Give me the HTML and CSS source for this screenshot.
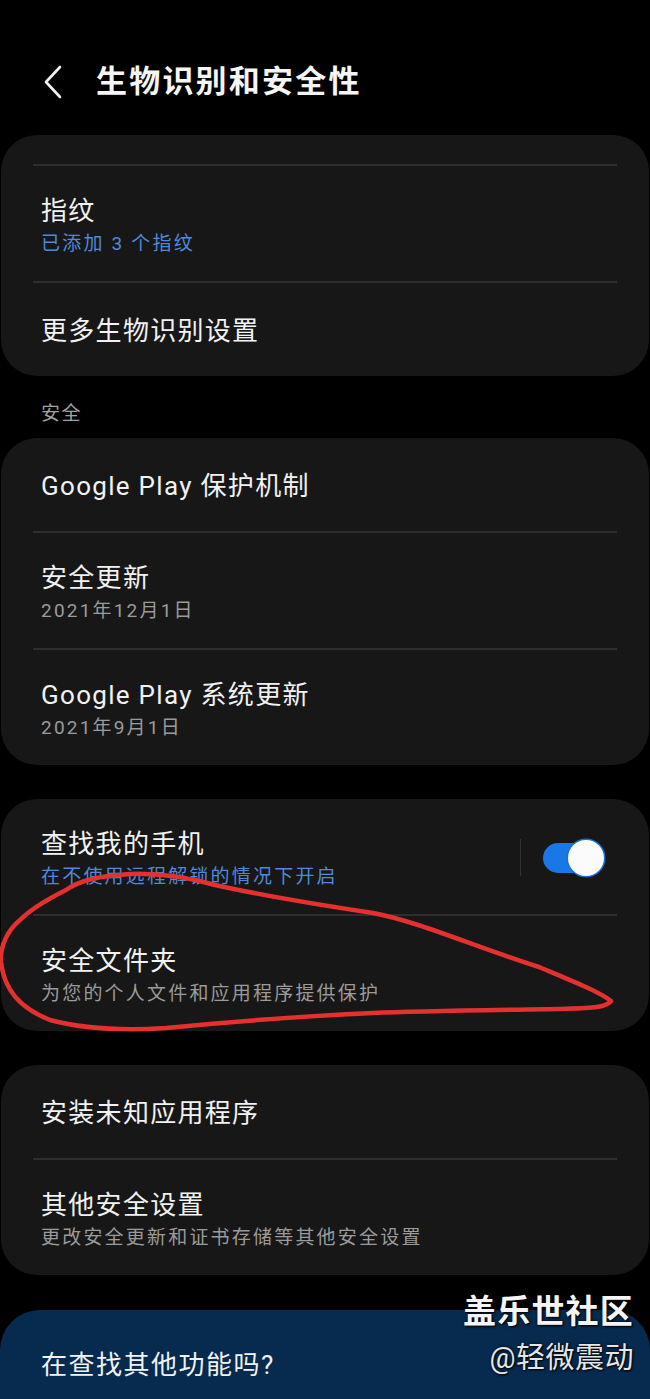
FILE: index.html
```html
<!DOCTYPE html>
<html lang="zh-CN">
<head>
<meta charset="utf-8">
<title>生物识别和安全性</title>
<link rel="stylesheet" href="styles.css">
</head>
<body>
<div class="page">
  <header class="header">
    <svg class="back" width="20" height="34" viewBox="0 0 20 34"><path d="M16 2 L2 17 L16 32" fill="none" stroke="#f0f0f0" stroke-width="2.6" stroke-linecap="round" stroke-linejoin="round"/></svg>
    <h1 class="title">生物识别和安全性</h1>
  </header>

  <section class="card">
    <div class="cut"></div>
    <div class="divider"></div>
    <div class="row two">
      <div class="t">指纹</div>
      <div class="s blue">已添加 3 个指纹</div>
    </div>
    <div class="divider"></div>
    <div class="row one">
      <div class="t">更多生物识别设置</div>
    </div>
  </section>

  <div class="label">安全</div>

  <section class="card">
    <div class="row one">
      <div class="t">Google Play 保护机制</div>
    </div>
    <div class="divider"></div>
    <div class="row two">
      <div class="t">安全更新</div>
      <div class="s">2021年12月1日</div>
    </div>
    <div class="divider"></div>
    <div class="row two">
      <div class="t">Google Play 系统更新</div>
      <div class="s">2021年9月1日</div>
    </div>
  </section>

  <section class="card gap">
    <div class="row two flexrow">
      <div class="texts">
        <div class="t">查找我的手机</div>
        <div class="s blue">在不使用远程解锁的情况下开启</div>
      </div>
      <div class="vline"></div>
      <div class="switch"><div class="track"></div><div class="thumb"></div></div>
    </div>
    <div class="divider"></div>
    <div class="row two">
      <div class="t">安全文件夹</div>
      <div class="s">为您的个人文件和应用程序提供保护</div>
    </div>
  </section>

  <section class="card gap">
    <div class="row one">
      <div class="t">安装未知应用程序</div>
    </div>
    <div class="divider"></div>
    <div class="row two">
      <div class="t">其他安全设置</div>
      <div class="s">更改安全更新和证书存储等其他安全设置</div>
    </div>
  </section>

  <section class="bottom">
    <div class="bt">在查找其他功能吗?</div>
  </section>

  <div class="watermark">
    <div class="wm1">盖乐世社区</div>
    <div class="wm2">@轻微震动</div>
  </div>

  <svg class="loop" width="650" height="1399" viewBox="0 0 650 1399">
    <path d="M66 890 C 80 880, 100 876, 130 874 C 160 873, 190 878, 215 885 C 260 895, 320 905, 373 913 C 420 922, 470 945, 539 967 C 570 980, 600 992, 611 1001 C 606 1008, 590 1008, 560 1009 C 500 1010, 420 1011, 373 1013 C 300 1016, 240 1021, 166 1028 C 120 1031, 80 1028, 50 1020 C 20 1008, 4 990, 1 962 C 0 945, 8 930, 20 920 C 32 908, 50 898, 66 890" fill="none" stroke="#e53030" stroke-width="4.5" stroke-linecap="round" stroke-linejoin="round"/>
  </svg>
</div>
</body>
</html>
```

FILE: styles.css
```css
* { box-sizing: border-box; }
html, body { margin: 0; padding: 0; background: #000; }
body {
  width: 650px;
  height: 1399px;
  overflow: hidden;
  font-family: Roboto, "Noto Sans CJK SC", sans-serif;
  color: #f2f2f2;
}
.page { position: relative; width: 650px; height: 1399px; overflow: hidden; }

.header {
  height: 135px;
  display: flex;
  align-items: center;
  padding: 29px 0 0 44px;
}
.back { display: block; margin-right: 32px; }
.title {
  margin: 0;
  font-size: 31px;
  font-weight: 700;
  letter-spacing: 2.2px;
  line-height: 40px;
  color: #f5f5f5;
}

.card {
  margin: 0 1px;
  background: #171717;
  border-radius: 36px;
  overflow: hidden;
}
.card.gap { margin-top: 34px; }
.cut { height: 29px; }
.divider {
  height: 2px;
  margin: 0 32px;
  background: #2e2e2e;
}
.row { padding-left: 40px; padding-right: 40px; }
.row.one { height: 93px; padding-top: 31px; }
.row.two { height: 115px; padding-top: 28px; }
.t {
  font-size: 26px;
  line-height: 34px;
  letter-spacing: 1.3px;
  color: #f2f2f2;
  white-space: nowrap;
}
.s {
  font-size: 19px;
  line-height: 32px;
  letter-spacing: 2.2px;
  color: #9b9b9b;
  white-space: nowrap;
}
.s.blue { color: #4f8ad8; }

.flexrow { display: flex; align-items: flex-start; padding-right: 45px; }
.texts { flex: 1; }
.vline {
  width: 1.5px;
  height: 37px;
  margin-top: 12px;
  margin-right: 22px;
  background: #333;
}
.switch {
  display: flex;
  align-items: center;
  height: 37px;
  margin-top: 12px;
}
.track {
  width: 46px;
  height: 30px;
  border-radius: 15px;
  background: #1a78e6;
}
.thumb {
  width: 36px;
  height: 36px;
  margin-left: -21px;
  border-radius: 50%;
  background: #fbfbfb;
  box-shadow: 0 0 0 1.5px #1a6fd6;
}

.label {
  height: 62px;
  padding: 24px 0 0 41px;
  font-size: 19px;
  line-height: 28px;
  letter-spacing: 1.5px;
  color: #a3a3a3;
}

.bottom {
  margin-top: 35px;
  height: 140px;
  background: #062b4e;
  border-radius: 40px 40px 0 0;
  padding: 38px 0 0 41px;
}
.bt {
  font-size: 26px;
  line-height: 34px;
  letter-spacing: 1.5px;
  color: #f2f2f2;
}

.watermark {
  position: absolute;
  right: 16px;
  top: 1292px;
  text-align: right;
  color: #f4f4f4;
  text-shadow: 1px 1px 2px #000, 0 0 3px rgba(0,0,0,0.8);
}
.wm1 { font-size: 33px; font-weight: 700; line-height: 40px; letter-spacing: 1.2px; }
.wm2 { font-size: 29px; line-height: 40px; margin-top: 6px; letter-spacing: 0.5px; color: #e6e6e6; }

.loop {
  position: absolute;
  left: 0;
  top: 0;
  pointer-events: none;
}
```
